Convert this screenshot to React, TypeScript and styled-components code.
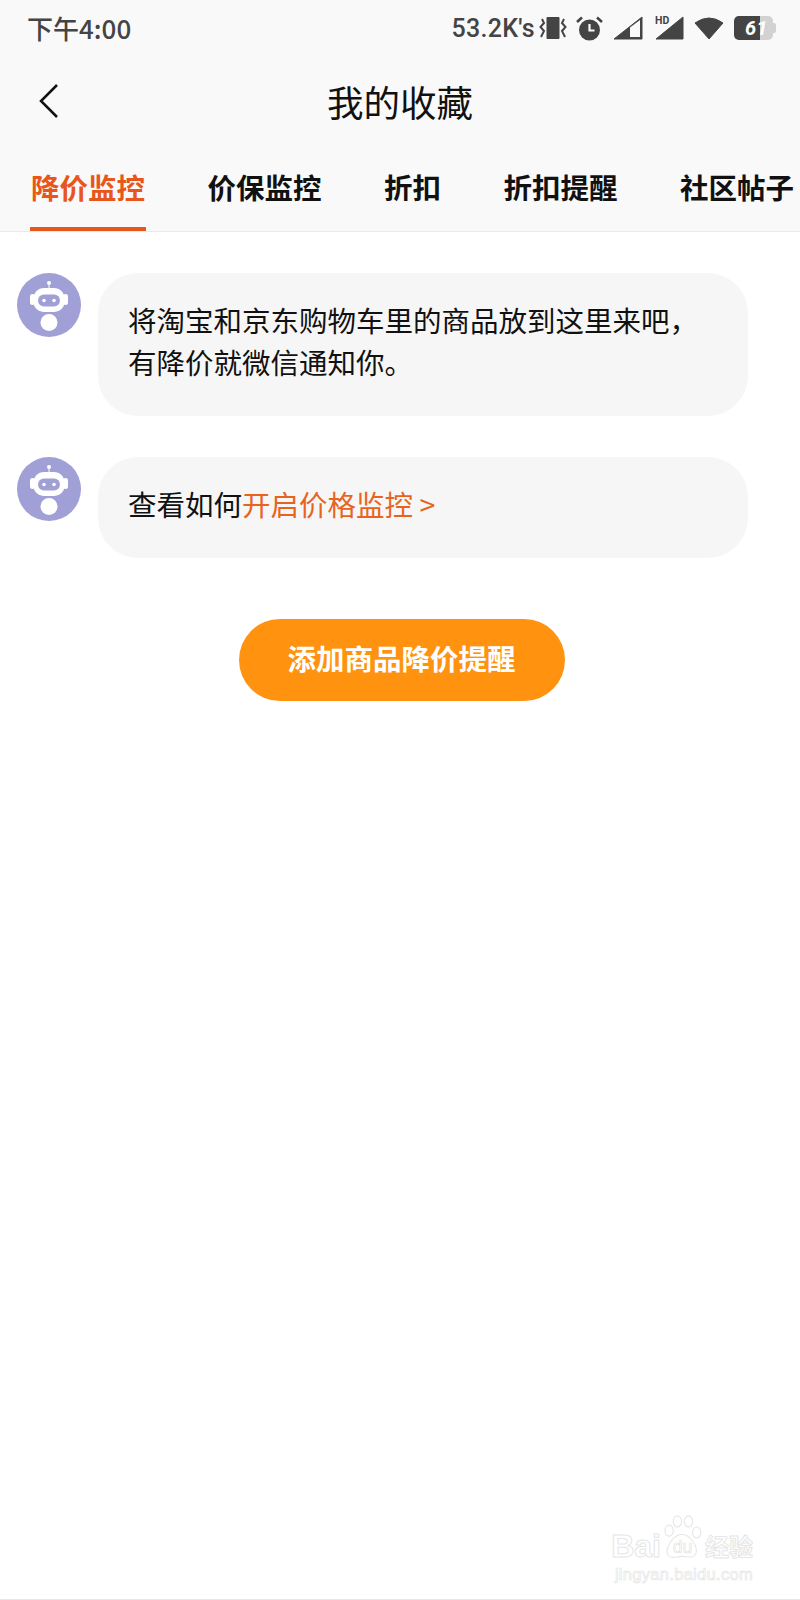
import React from 'react';
import styled, { createGlobalStyle } from 'styled-components';

const FONT = '"Noto Sans CJK SC", "Noto Sans", sans-serif';

const GlobalStyle = createGlobalStyle`
    html, body {
        margin: 0;
        padding: 0;
        background: #fff;
    }
    * {
        box-sizing: border-box;
    }
`;

const tabs = ['降价监控', '价保监控', '折扣', '折扣提醒', '社区帖子'];

const Robot = () => (
    <AvatarCircle>
        <svg width="64" height="64" viewBox="0 0 64 64">
            <circle cx="32" cy="32" r="32" fill="#a0a0d6" />
            <circle cx="32" cy="10" r="2" fill="#fff" />
            <path d="M32 12 V16" stroke="#fff" strokeWidth="1" />
            <rect x="13" y="21" width="5" height="11" rx="2.500" fill="#fff" />
            <rect x="46" y="21" width="5" height="11" rx="2.500" fill="#fff" />
            <rect x="16.500" y="15" width="31" height="24" rx="10" fill="#fff" />
            <rect x="21" y="21.500" width="22" height="12" rx="6" fill="#a0a0d6" />
            <circle cx="27" cy="27.500" r="1.800" fill="#fff" />
            <circle cx="37" cy="27.500" r="1.800" fill="#fff" />
            <circle cx="32" cy="49.500" r="8.500" fill="#fff" />
        </svg>
    </AvatarCircle>
);

const StatusIcons = () => (
    <>
        <VibrateIcon width="29" height="24" viewBox="0 0 29 24">
            <rect x="7.500" y="1" width="13" height="22" rx="1" fill="#444" />
            <path d="M3 3 L5 7 L1.500 11 L5 15 L2 21" stroke="#444" strokeWidth="2" fill="none" />
            <path d="M25 3 L23 7 L26.500 11 L23 15 L26 21" stroke="#444" strokeWidth="2" fill="none" />
        </VibrateIcon>
        <svg width="27" height="25" viewBox="0 0 27 25">
            <circle cx="13.500" cy="14" r="10.500" fill="#444" />
            <path d="M13.500 8 V14.500 H18.500" stroke="#f9f9f9" strokeWidth="2.200" fill="none" />
            <path d="M1 6 L6 1.500 M26 6 L21 1.500" stroke="#444" strokeWidth="2.600" />
        </svg>
        <svg width="32" height="24" viewBox="0 0 32 24">
            <path d="M1 23 L29 1 V23 Z" fill="#444" stroke="#444" strokeLinejoin="round" />
            <path d="M17 21 V11.500 L27 4 V21 Z" fill="#f9f9f9" />
        </svg>
        <HdIcon width="29" height="24" viewBox="0 0 29 24">
            <path d="M1 23 L28 1 V23 Z" fill="#444" stroke="#444" strokeLinejoin="round" />
            <HdLabel x="0" y="8">HD</HdLabel>
        </HdIcon>
        <svg width="30" height="24" viewBox="0 0 30 24">
            <path d="M1 7 Q15 -3 29 7 L15 23 Z" fill="#444" stroke="#444" strokeLinejoin="round" />
        </svg>
        <Battery>
            <BatteryFill>61</BatteryFill>
            <BatteryCap />
        </Battery>
    </>
);

const Watermark = () => (
    <MarkWrap>
        <MarkRow>
            <MarkBig>Bai</MarkBig>
            <svg width="42" height="46" viewBox="0 0 44 50">
                <g fill="none" stroke="#e6e6e6" strokeWidth="1.200">
                    <ellipse cx="8" cy="17" rx="4.500" ry="6" />
                    <ellipse cx="17" cy="7" rx="4.500" ry="6" />
                    <ellipse cx="29" cy="7" rx="4.500" ry="6" />
                    <ellipse cx="38" cy="19" rx="4.500" ry="6" />
                    <path d="M22 21 C30 21 40 34 37 42 C34 48 28 45 22 45 C16 45 9 49 6 42 C4 34 14 21 22 21 Z" />
                </g>
                <MarkDu x="12" y="41">du</MarkDu>
            </svg>
            <MarkCn>经验</MarkCn>
        </MarkRow>
        <MarkUrl>jingyan.baidu.com</MarkUrl>
    </MarkWrap>
);

const App = () => {
    return (
        <Page>
            <GlobalStyle />
            <Header>
                <StatusBar>
                    <Clock>下午4:00</Clock>
                    <StatusRight>
                        <Speed>53.2K's</Speed>
                        <StatusIcons />
                    </StatusRight>
                </StatusBar>
                <TitleBar>
                    <BackButton>
                        <svg width="24" height="36" viewBox="0 0 24 36">
                            <path d="M20 2 L4 18 L20 34" stroke="#111" strokeWidth="2.500" fill="none" />
                        </svg>
                    </BackButton>
                    <Title>我的收藏</Title>
                </TitleBar>
                <TabRow>
                    {tabs.map((t, i) => <Tab key={t} $active={i === 0}>{t}</Tab>)}
                </TabRow>
            </Header>
            <Content>
                <Message>
                    <Robot />
                    <Bubble>
                        将淘宝和京东购物车里的商品放到这里来吧，<br />
                        有降价就微信通知你。
                    </Bubble>
                </Message>
                <Message>
                    <Robot />
                    <Bubble $short>
                        查看如何<OrangeLink>开启价格监控 &gt;</OrangeLink>
                    </Bubble>
                </Message>
                <AddButton>添加商品降价提醒</AddButton>
            </Content>
            <Watermark />
        </Page>
    );
};

const Page = styled("div")`
    position: relative;
    width: 800px;
    height: 1600px;
    display: flex;
    flex-direction: column;
    background: #fff;
    font-family: ${FONT};
    overflow: hidden;
    border-bottom: 1px solid #e8e8e8;
`;

const Header = styled("header")`
    height: 232px;
    flex-shrink: 0;
    background: #f9f9f9;
    border-bottom: 1px solid #e9e9e9;
    display: flex;
    flex-direction: column;
`;

const StatusBar = styled("div")`
    height: 56px;
    padding: 0 27px;
    display: flex;
    justify-content: space-between;
    align-items: center;
    color: #444;
`;

const Clock = styled("span")`
    font-size: 26px;
    font-weight: 500;
    line-height: 1;
`;

const StatusRight = styled("div")`
    display: flex;
    align-items: center;
    gap: 10px;
`;

const Speed = styled("span")`
    font-family: Roboto, sans-serif;
    font-size: 25px;
    font-weight: 500;
    letter-spacing: 0.300px;
    margin-right: -6px;
`;

const VibrateIcon = styled("svg")`
    margin-right: -2px;
`;

const HdIcon = styled("svg")`
    overflow: visible;
`;

const HdLabel = styled("text")`
    font-family: Roboto, sans-serif;
    font-size: 10.500px;
    font-weight: 700;
    fill: #444;
`;

const Battery = styled("div")`
    position: relative;
    width: 39px;
    height: 24px;
    display: flex;
    align-items: center;
    background: #d2d2d2;
    border-radius: 5px;
`;

const BatteryFill = styled("div")`
    width: 26px;
    height: 24px;
    padding-left: 11px;
    background: #444;
    border-radius: 5px 0 0 5px;
    color: #fff;
    font-family: Roboto, sans-serif;
    font-size: 20px;
    font-style: italic;
    font-weight: 700;
    line-height: 24px;
    white-space: nowrap;
`;

const BatteryCap = styled("div")`
    position: absolute;
    right: -3px;
    top: 7px;
    width: 3px;
    height: 10px;
    background: #d2d2d2;
    border-radius: 0 2px 2px 0;
`;

const TitleBar = styled("div")`
    position: relative;
    height: 98px;
    padding-bottom: 6px;
    display: flex;
    align-items: center;
    justify-content: center;
`;

const BackButton = styled("div")`
    position: absolute;
    left: 37px;
    top: 27px;
    line-height: 0;
`;

const Title = styled("h1")`
    margin: 0;
    font-size: 36.500px;
    font-weight: 400;
    color: #111;
    line-height: 1;
`;

const TabRow = styled("nav")`
    flex: 1;
    display: flex;
    gap: 60.500px;
    padding-left: 30px;
    white-space: nowrap;
`;

const Tab = styled("div")<{ $active?: boolean }>`
    height: 100%;
    padding: 13px 1px 0;
    font-size: 28.500px;
    font-weight: 700;
    line-height: 40px;
    color: ${p => (p.$active ? '#e8561c' : '#111')};
    border-bottom: 4px solid ${p => (p.$active ? '#e8561c' : 'transparent')};
`;

const Content = styled("main")`
    display: flex;
    flex-direction: column;
    padding-top: 41px;
`;

const Message = styled("div")`
    display: flex;
    align-items: flex-start;
    gap: 17px;
    padding-left: 17px;
    margin-bottom: 41px;
`;

const AvatarCircle = styled("div")`
    width: 64px;
    height: 64px;
    flex-shrink: 0;
    line-height: 0;
`;

const Bubble = styled("div")<{ $short?: boolean }>`
    width: 650px;
    height: ${p => (p.$short ? '101px' : '143px')};
    padding: 26px 0 0 30px;
    background: #f6f6f6;
    border-radius: 40px;
    font-size: 28.500px;
    line-height: 42px;
    color: #111;
    white-space: nowrap;
`;

const OrangeLink = styled("a")`
    color: #e8641e;
`;

const AddButton = styled("button")`
    align-self: center;
    width: 326px;
    height: 82px;
    margin: 20px 0 0 3px;
    padding: 0 0 6px;
    border: none;
    border-radius: 41px;
    background: #ff930f;
    color: #fff;
    font-family: ${FONT};
    font-size: 28.500px;
    font-weight: 700;
`;

const MarkWrap = styled("div")`
    position: absolute;
    right: 47px;
    bottom: 15px;
    color: transparent;
`;

const MarkRow = styled("div")`
    display: flex;
    align-items: flex-end;
    height: 46px;
`;

const MarkBig = styled("span")`
    font-family: "Liberation Sans", sans-serif;
    font-size: 32px;
    font-weight: 700;
    line-height: 30px;
    -webkit-text-stroke: 1px #e6e6e6;
`;

const MarkDu = styled("text")`
    font-family: "Liberation Sans", sans-serif;
    font-size: 19px;
    fill: none;
    stroke: #e6e6e6;
    stroke-width: 0.800px;
`;

const MarkCn = styled("span")`
    font-size: 24px;
    font-weight: 700;
    line-height: 30px;
    margin-left: 2px;
    -webkit-text-stroke: 1px #e6e6e6;
`;

const MarkUrl = styled("div")`
    font-family: "Liberation Sans", sans-serif;
    font-size: 16.500px;
    line-height: 20px;
    letter-spacing: 0.300px;
    margin-top: 3px;
    text-align: right;
    -webkit-text-stroke: 0.700px #e6e6e6;
`;

export default App;
